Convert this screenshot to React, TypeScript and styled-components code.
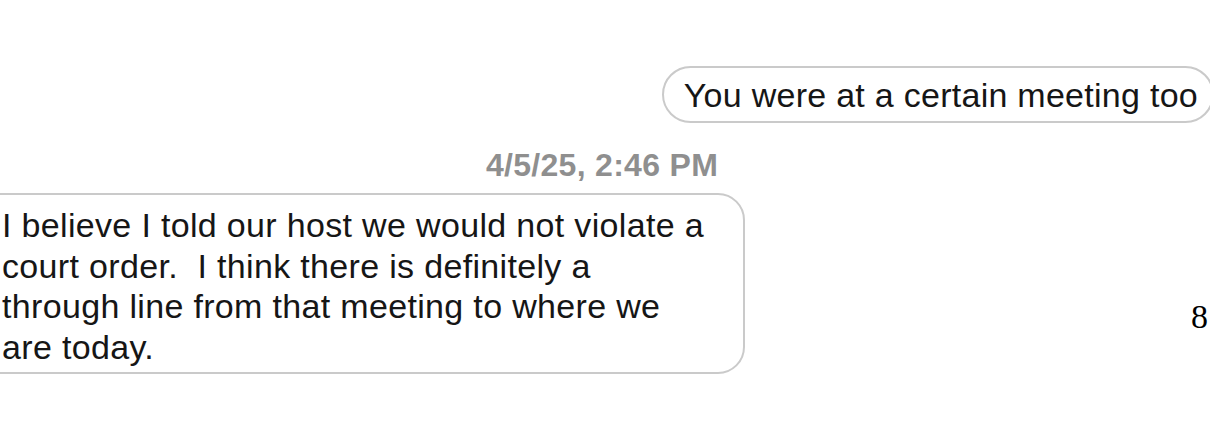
import React from "react";
import styled, { createGlobalStyle } from "styled-components";

const GlobalStyle = createGlobalStyle`
	html, body {
		margin: 0;
		padding: 0;
		background: #ffffff;
	}
`;

const Page = styled.div`
	width: 1210px;
	height: 423px;
	overflow: hidden;
	background: #ffffff;
	font-family: "Liberation Sans", Arial, sans-serif;
	color: #161616;
	display: flex;
	flex-direction: column;
	padding-top: 66px;
	box-sizing: border-box;
`;

const SentRow = styled.div`
	display: flex;
	justify-content: flex-end;
	margin-right: -4px;
`;

const Bubble = styled.div<{ $sent?: boolean }>`
	box-sizing: border-box;
	border: 2px solid #cacaca;
	border-radius: ${(p) => (p.$sent ? "29px" : "27px")};
	font-size: 34px;
	letter-spacing: ${(p) => (p.$sent ? "0.27px" : "0.33px")};
	line-height: ${(p) => (p.$sent ? "38px" : "40.5px")};
	white-space: pre-wrap;
	background: #ffffff;
`;

const SentBubble = styled(Bubble)`
	height: 57px;
	padding: 8px 14px 7px 20px;
`;

const Stamp = styled.div`
	margin-top: 24px;
	text-align: center;
	font-size: 32px;
	letter-spacing: 0.3px;
	line-height: 36px;
	font-weight: 700;
	color: #8f8f8f;
	padding-right: 6px;
`;

const ReceivedRow = styled.div`
	display: flex;
	justify-content: space-between;
	align-items: flex-start;
	margin-top: 10px;
	margin-left: -30px;
`;

const ReceivedBubble = styled(Bubble)`
	width: 775px;
	padding: 10px 20px 5px 30px;
`;

const PageNumber = styled.div`
	font-family: "Liberation Serif", "Times New Roman", serif;
	font-size: 34px;
	line-height: 34px;
	margin-top: 107px;
	margin-right: 2px;
	color: #000;
`;

export default function App() {
	return (
		<>
			<GlobalStyle />
			<Page>
				<SentRow>
					<SentBubble $sent>You were at a certain meeting too</SentBubble>
				</SentRow>
				<Stamp>4/5/25, 2:46 PM</Stamp>
				<ReceivedRow>
					<ReceivedBubble>
						{
							"I believe I told our host we would not violate a\ncourt order.  I think there is definitely a\nthrough line from that meeting to where we\nare today."
						}
					</ReceivedBubble>
					<PageNumber>8</PageNumber>
				</ReceivedRow>
			</Page>
		</>
	);
}
